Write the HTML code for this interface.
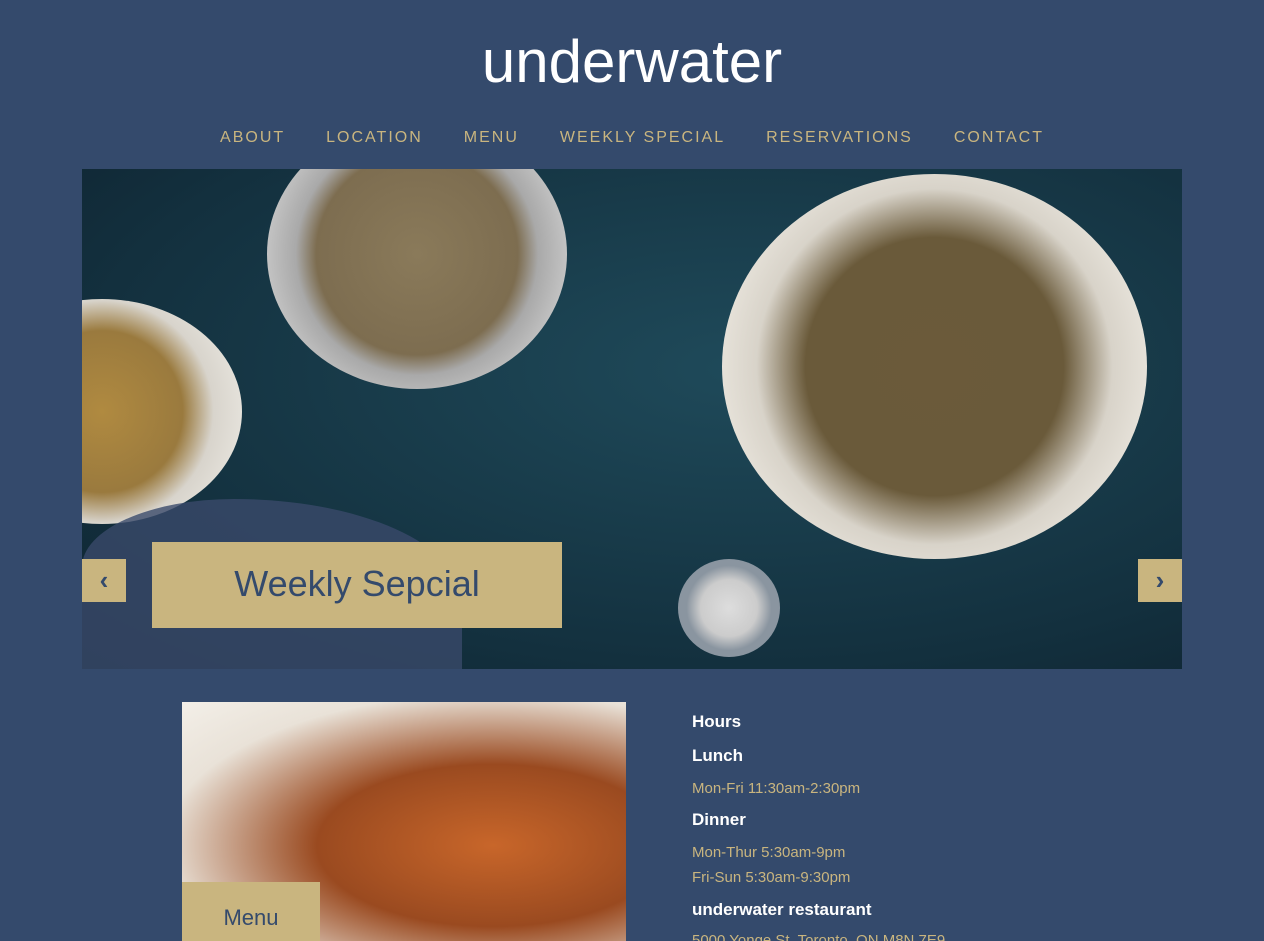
<!DOCTYPE html>
<html><head><meta charset="utf-8"><style>
*{margin:0;padding:0;box-sizing:border-box}
html{overflow:hidden;height:941px}
body{width:1264px;height:941px;overflow:hidden;background:#344a6c;font-family:"Liberation Sans",sans-serif;position:relative}
.logo{position:absolute;left:0;width:1264px;top:24px;text-align:center;color:#fff;font-size:60px;letter-spacing:0;line-height:76px}
.nav{position:absolute;top:129px;left:0;width:1264px;text-align:center;color:#c9b57f;font-size:16px;letter-spacing:2px}
.nav span{margin:0 20.5px}
.hero{position:absolute;left:82px;top:169px;width:1100px;height:500px;overflow:hidden;background:radial-gradient(ellipse at 60% 40%,#1f4a5a,#13303e 70%,#0e2330)}
.plate{position:absolute;border-radius:50%}
.btn{position:absolute;background:#c9b57f;color:#344a6c;font-size:26px;font-weight:bold;text-align:center;line-height:43px;width:44px;height:43px}
.cap{position:absolute;left:152px;top:542px;width:410px;height:86px;background:#c9b57f;color:#344a6c;font-size:36px;text-align:center;line-height:84px}
.pasta{position:absolute;left:182px;top:702px;width:444px;height:239px;overflow:hidden;background:radial-gradient(ellipse at 70% 60%,#c8662a,#9a4a20 40%,#e9e2d8 75%,#f3efe8)}
.mcap{position:absolute;left:182px;top:882px;width:138px;height:59px;background:#c9b57f;color:#344a6c;font-size:22px;text-align:center;line-height:72px}
.info{position:absolute;left:692px;color:#fff;font-weight:bold;font-size:17px}
.g{position:absolute;left:692px;color:#c9b57f;font-size:15px;white-space:nowrap}
</style></head><body>
<div class="logo">underwater</div>
<div class="nav"><span>ABOUT</span><span>LOCATION</span><span>MENU</span><span>WEEKLY SPECIAL</span><span>RESERVATIONS</span><span>CONTACT</span></div>
<div class="hero">
<div class="plate" style="left:185px;top:-50px;width:300px;height:270px;background:radial-gradient(circle,#8a7a5a 0,#7d6d50 50%,#a9a9a9 60%,#c4c4c4 75%)"></div>
<div class="plate" style="left:640px;top:5px;width:425px;height:385px;background:radial-gradient(circle,#6b5a3a 0,#6a5a3a 45%,#d8d3c9 62%,#ece8e0 80%)"></div>
<div class="plate" style="left:-120px;top:130px;width:280px;height:225px;background:radial-gradient(circle,#b08a40 0,#9a7a3e 45%,#d8d4cc 62%,#e6e3dc 80%)"></div>
<div class="plate" style="left:596px;top:390px;width:102px;height:98px;background:radial-gradient(circle,#ddd 0,#ccc 40%,#8a95a0 60%)"></div>
<div style="position:absolute;left:0;top:330px;width:380px;height:170px;background:#3a4a6a;border-radius:40% 60% 0 0;opacity:.8"></div>
</div>
<div class="btn" style="left:82px;top:559px">‹</div>
<div class="btn" style="left:1138px;top:559px">›</div>
<div class="cap">Weekly Sepcial</div>
<div class="pasta"></div>
<div class="mcap">Menu</div>
<div class="info" style="top:712px">Hours</div>
<div class="info" style="top:746px">Lunch</div>
<div class="g" style="top:780px">Mon-Fri 11:30am-2:30pm</div>
<div class="info" style="top:810px">Dinner</div>
<div class="g" style="top:844px">Mon-Thur 5:30am-9pm</div>
<div class="g" style="top:869px">Fri-Sun 5:30am-9:30pm</div>
<div class="info" style="top:900px">underwater restaurant</div>
<div class="g" style="top:932px">5000 Yonge St, Toronto, ON M8N 7E9</div>
</body></html>
